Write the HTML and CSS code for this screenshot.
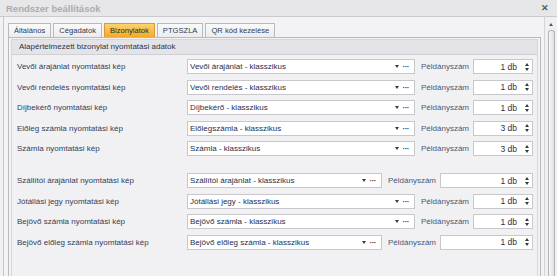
FILE: index.html
```html
<!DOCTYPE html>
<html lang="hu">
<head>
  <meta charset="UTF-8">
  <title>Rendszer beállítások</title>
  <link rel="stylesheet" href="styles.css">
</head>
<body>
  <div class="window">
    <div class="titlebar">
      <span class="title">Rendszer beállítások</span>
      <span class="close">✕</span>
    </div>

    <div class="client">
      <div class="main">
        <div class="tabs">
          <div class="tab">Általános</div>
          <div class="tab">Cégadatok</div>
          <div class="tab active">Bizonylatok</div>
          <div class="tab">PTGSZLA</div>
          <div class="tab">QR kód kezelése</div>
        </div>

        <div class="tabpage">
          <div class="group">
            <div class="group-head">Alapértelmezett bizonylat nyomtatási adatok</div>
            <div class="rows">
              <div class="row">
                <div class="row-label">Vevői árajánlat nyomtatási kép</div>
                <div class="combo"><span class="combo-text">Vevői árajánlat - klasszikus</span><span class="drop"></span><span class="dots">···</span></div>
                <div class="copies">Példányszám</div>
                <div class="spin"><span class="spin-val">1 db</span><span class="arrows"><i class="up"></i><i class="down"></i></span></div>
              </div>
              <div class="row">
                <div class="row-label">Vevői rendelés nyomtatási kép</div>
                <div class="combo"><span class="combo-text">Vevői rendelés - klasszikus</span><span class="drop"></span><span class="dots">···</span></div>
                <div class="copies">Példányszám</div>
                <div class="spin"><span class="spin-val">1 db</span><span class="arrows"><i class="up"></i><i class="down"></i></span></div>
              </div>
              <div class="row">
                <div class="row-label">Díjbekérő nyomtatási kép</div>
                <div class="combo"><span class="combo-text">Díjbekérő - klasszikus</span><span class="drop"></span><span class="dots">···</span></div>
                <div class="copies">Példányszám</div>
                <div class="spin"><span class="spin-val">1 db</span><span class="arrows"><i class="up"></i><i class="down"></i></span></div>
              </div>
              <div class="row">
                <div class="row-label">Előleg számla nyomtatási kép</div>
                <div class="combo"><span class="combo-text">Előlegszámla - klasszikus</span><span class="drop"></span><span class="dots">···</span></div>
                <div class="copies">Példányszám</div>
                <div class="spin"><span class="spin-val">3 db</span><span class="arrows"><i class="up"></i><i class="down"></i></span></div>
              </div>
              <div class="row">
                <div class="row-label">Számla nyomtatási kép</div>
                <div class="combo"><span class="combo-text">Számla - klasszikus</span><span class="drop"></span><span class="dots">···</span></div>
                <div class="copies">Példányszám</div>
                <div class="spin"><span class="spin-val">3 db</span><span class="arrows"><i class="up"></i><i class="down"></i></span></div>
              </div>

              <div class="row row-sep">
                <div class="row-label">Szállítói árajánlat nyomtatási kép</div>
                <div class="combo narrow"><span class="combo-text">Szállítói árajánlat - klasszikus</span><span class="drop"></span><span class="dots">···</span></div>
                <div class="copies">Példányszám</div>
                <div class="spin"><span class="spin-val">1 db</span><span class="arrows"><i class="up"></i><i class="down"></i></span></div>
              </div>
              <div class="row row-mid">
                <div class="row-label">Jótállási jegy nyomtatási kép</div>
                <div class="combo"><span class="combo-text">Jótállási jegy - klasszikus</span><span class="drop"></span><span class="dots">···</span></div>
                <div class="copies">Példányszám</div>
                <div class="spin"><span class="spin-val">1 db</span><span class="arrows"><i class="up"></i><i class="down"></i></span></div>
              </div>
              <div class="row">
                <div class="row-label">Bejövő számla nyomtatási kép</div>
                <div class="combo"><span class="combo-text">Bejövő számla - klasszikus</span><span class="drop"></span><span class="dots">···</span></div>
                <div class="copies">Példányszám</div>
                <div class="spin"><span class="spin-val">1 db</span><span class="arrows"><i class="up"></i><i class="down"></i></span></div>
              </div>
              <div class="row row-last">
                <div class="row-label">Bejövő előleg számla nyomtatási kép</div>
                <div class="combo narrow"><span class="combo-text">Bejövő előleg számla - klasszikus</span><span class="drop"></span><span class="dots">···</span></div>
                <div class="copies">Példányszám</div>
                <div class="spin"><span class="spin-val">1 db</span><span class="arrows"><i class="up"></i><i class="down"></i></span></div>
              </div>
            </div>
          </div>
        </div>
      </div>

      <div class="scrollbar">
        <span class="scroll-up"></span>
        <div class="thumb"></div>
      </div>
    </div>
  </div>
</body>
</html>
```

FILE: styles.css
```css
body {
  margin: 0;
  width: 557px;
  height: 276px;
  overflow: hidden;
  font-family: "Liberation Sans", Arial, sans-serif;
  font-size: 8px;
  color: #33405a;
  background: #f1f1f3;
}

.window {
  height: 276px;
  display: flex;
  flex-direction: column;
}

.titlebar {
  height: 16px;
  flex: none;
  display: flex;
  align-items: center;
  justify-content: space-between;
  padding: 0 8px 0 6px;
  background: #e7e7ea;
  border-bottom: 1px solid #cacace;
}

.title {
  font-size: 9.5px;
  font-weight: bold;
  color: #ababae;
}

.close {
  font-size: 9px;
  font-weight: bold;
  color: #5c5c60;
}

.client {
  flex: 1;
  display: flex;
  margin-left: 3px;
  border-left: 1px solid #c6c6ca;
  background: #f3f3f5;
  min-height: 0;
}

.main {
  flex: 1;
  padding: 6px 0 0 4px;
  display: flex;
  flex-direction: column;
}

.tabs {
  display: flex;
  gap: 2px;
  height: 14px;
  flex: none;
}

.tab {
  padding: 0 5px;
  font-size: 7.6px;
  line-height: 13px;
  border: 1px solid #b9b9bd;
  border-bottom: none;
  background: linear-gradient(#fafafa, #ececef);
  color: #2f3b52;
}

.tab.active {
  background: linear-gradient(#fdd26f, #f6a825);
  border-color: #d79a3a;
  color: #2a2a2a;
}

.tabpage {
  flex: 1;
  margin-right: 3px;
  border: 1px solid #b8b8bd;
  border-bottom: none;
  padding: 1px 2px 0 2px;
  background: #f3f3f5;
}

.group {
  height: 100%;
  border: 1px solid #d6d6da;
  border-bottom: none;
  background: #f1f1f3;
}

.group-head {
  height: 14px;
  line-height: 14px;
  padding-left: 7px;
  background: #e4e4e8;
  border-bottom: 1px solid #d0d0d4;
  color: #2c3548;
}

.rows {
  padding: 4px 4px 0 5px;
}

.row {
  display: flex;
  align-items: center;
  height: 15px;
  margin-bottom: 5.5px;
}

.row-sep {
  margin-top: 17px;
}

.row-mid {
  margin-top: 4.5px;
}

.row-last {
  margin-top: 1.5px;
}

.row-label {
  width: 170px;
  flex: none;
}

.combo {
  width: 228px;
  height: 15px;
  box-sizing: border-box;
  flex: none;
  display: flex;
  align-items: center;
  border: 1px solid #c8c8cc;
  background: #fff;
  padding: 0 5px 0 2px;
  color: #1f2f4e;
}

.combo.narrow {
  width: 195px;
}

.combo-text {
  flex: 1;
  white-space: nowrap;
  overflow: hidden;
}

.drop {
  width: 0;
  height: 0;
  border-left: 2.5px solid transparent;
  border-right: 2.5px solid transparent;
  border-top: 3px solid #3a3a3e;
  margin-right: 4px;
}

.dots {
  font-weight: bold;
  color: #3a3a3e;
  letter-spacing: -0.5px;
}

.copies {
  margin: 0 4px 0 6px;
  color: #4a5878;
}

.spin {
  flex: 1;
  height: 15px;
  box-sizing: border-box;
  display: flex;
  align-items: center;
  justify-content: flex-end;
  border: 1px solid #c8c8cc;
  background: #fff;
  padding-right: 3px;
  color: #1f2f4e;
}

.spin-val {
  margin-right: 8px;
  font-size: 8.5px;
}

.arrows {
  display: flex;
  flex-direction: column;
  gap: 2px;
}

.arrows i {
  display: block;
  width: 0;
  height: 0;
  border-left: 2.5px solid transparent;
  border-right: 2.5px solid transparent;
}

.arrows .up {
  border-bottom: 3px solid #3a3a3e;
}

.arrows .down {
  border-top: 3px solid #3a3a3e;
}

.scrollbar {
  width: 12px;
  flex: none;
  display: flex;
  flex-direction: column;
  align-items: center;
  border-left: 1px solid #d4d4d8;
  background: #f0f0f2;
  padding-top: 6px;
}

.scroll-up {
  width: 0;
  height: 0;
  border-left: 2.5px solid transparent;
  border-right: 2.5px solid transparent;
  border-bottom: 3px solid #55555a;
  margin-bottom: 4px;
}

.thumb {
  flex: 1;
  width: 5px;
  border: 1px solid #b4b4b9;
  border-bottom: none;
  border-radius: 3px 3px 0 0;
  background: linear-gradient(90deg, #f7f7f9, #dedee2);
}
```
